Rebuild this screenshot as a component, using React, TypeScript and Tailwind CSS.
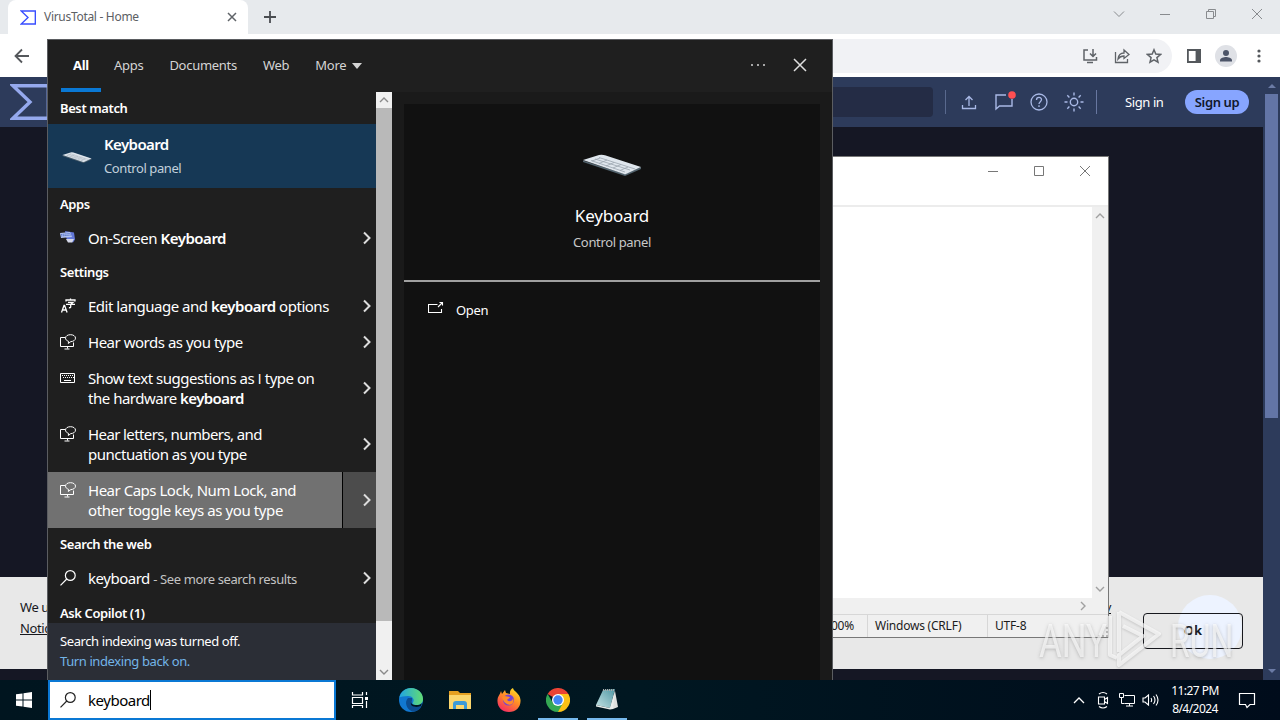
import type { ReactNode } from 'react';

type IconProps = { className?: string };

function VtLogo({ className }: IconProps) {
  return (
    <svg viewBox="0 0 40 36" className={className} fill="none" stroke="currentColor" strokeWidth="3.4">
      <path d="M3 1.7h35.3v32.6H3L20 18z" />
    </svg>
  );
}

function KeyboardImage({ className }: IconProps) {
  return (
    <svg viewBox="0 0 60 22" className={className}>
      <path d="M1 6.5l42 13.500 16-7v2l-16 7L1 8z" fill="#53646f" />
      <path d="M1 6L17 1q3-.8 6 .2L59 13l-15 7q-1 .4-2 0z" fill="#dfe6ed" />
      <g stroke="#9aa4af" strokeWidth=".8" fill="none">
        <path d="M9 6.5l34 11.500M13 5l35 11M17 3.500l36 11.500" />
        <path d="M18 4L10 7M25 6l-8 3.500M32 8.500l-8 3.500M39 10.500l-8 3.500M46 13l-8 3.500" />
      </g>
    </svg>
  );
}

function NarratorIcon() {
  return (
    <svg viewBox="0 0 16 16" className="size-4" fill="none" stroke="#fff" strokeWidth="1">
      <path d="M5 3.5H.5v9h13V8.500M4.500 15h5M7.500 12.500v2" />
      <path d="M8.300 9.500l.3-2.100C6.500 6.500 5.500 5.600 5.500 4.100 5.500 2 7.700.7 10.500.7s5 1.400 5 3.400-2 3.400-4.700 3.500z" />
    </svg>
  );
}

function LanguageIcon() {
  return (
    <svg viewBox="0 0 16 16" className="size-4" fill="none" stroke="#fff" strokeWidth="1.3">
      <path d="M1.500 14.500L4 7.500h.6l2.500 7M2.500 12h4M6 3.500V2h9v1.500M10.500.5V2M8 4.300h5l-2.300 2V9q0 1-1.800.7M6 6.300h9" />
    </svg>
  );
}

function TinyKeyboardIcon() {
  return (
    <svg viewBox="0 0 16 16" className="size-4" fill="none" stroke="#fff">
      <path d="M.5 3.5h14v9H.5z" />
      <path d="M2 5.500h12M3 7.500h11" strokeDasharray="1 1" />
      <path d="M4 10.500h7" />
    </svg>
  );
}

function OskIcon() {
  return (
    <svg viewBox="0 0 16 16" className="size-4">
      <path d="M5 1l9 1.500 1 7-2 3-6-2z" fill="#6378d8" />
      <path d="M6 9h8l-2 3.500H8z" fill="#d5d8e8" />
      <path d="M0 3l10-1 2 5-11 1z" fill="#b3c3f0" />
      <path d="M1 4.500l9-1M1 6l10-1" stroke="#5775c8" strokeDasharray="1.5 .6" />
    </svg>
  );
}

function SearchIcon({ className }: IconProps) {
  return (
    <svg viewBox="0 0 16 16" className={className} fill="none" stroke="currentColor" strokeWidth="1.2">
      <circle cx="10.3" cy="5.5" r="4.9" />
      <path d="M6.800 9L.5 15.300" />
    </svg>
  );
}

function Chevron() {
  return (
    <svg viewBox="0 0 10 14" className="h-3.5 w-2.5" fill="none" stroke="#dcdcdc" strokeWidth="2">
      <path d="M2 1.500L7.500 7 2 12.500" />
    </svg>
  );
}

function SmallArrow({ className }: IconProps) {
  return (
    <svg viewBox="0 0 10 6" className={className} fill="none" stroke="currentColor" strokeWidth="1.4">
      <path d="M1 5l4-4 4 4" />
    </svg>
  );
}

function TabStrip() {
  return (
    <div className="flex h-[34px] bg-[#e7eaed] pl-2">
      <div className="flex w-60 items-center rounded-t-lg bg-white pl-3 pr-2.5">
        <VtLogo className="h-[15px] w-4 text-[#394eff]" />
        <span className="ml-2 flex-1 text-xs tracking-[-0.3px] text-[#5c6064]">VirusTotal - Home</span>
        <svg viewBox="0 0 12 12" className="size-3" stroke="#5f6368" strokeWidth="1.5">
          <path d="M2 2l8 8M10 2l-8 8" />
        </svg>
      </div>
      <svg viewBox="0 0 12 12" className="ml-4 mt-[11px] size-3" stroke="#4a4d51" strokeWidth="1.8">
        <path d="M6 0v12M0 6h12" />
      </svg>
      <div className="ml-auto flex gap-[34px] pr-[17px] pt-2 text-[#888b8e]">
        <svg viewBox="0 0 12 12" className="size-3" fill="none" stroke="currentColor">
          <path d="M1 3.500l5 5 5-5" />
        </svg>
        <svg viewBox="0 0 12 12" className="size-3" stroke="currentColor">
          <path d="M1 6.500h10" />
        </svg>
        <svg viewBox="0 0 12 12" className="size-3" fill="none" stroke="currentColor">
          <path d="M1.500 3.500h7v7h-7zM3.500 3.500v-2h7v7h-2" />
        </svg>
        <svg viewBox="0 0 12 12" className="size-3" stroke="currentColor">
          <path d="M1 1l10 10M11 1L1 11" />
        </svg>
      </div>
    </div>
  );
}

function Toolbar() {
  return (
    <div className="flex h-[43px] items-center bg-white pl-[14px]">
      <svg viewBox="0 0 16 16" className="size-4" fill="none" stroke="#55585c" strokeWidth="1.8">
        <path d="M15 8H2M8 1.500L1.500 8 8 14.500" />
      </svg>
      <div className="ml-24 flex h-[34px] flex-1 items-center justify-end gap-4 rounded-full bg-[#f1f2f5] pr-[10px] text-[#5f6368]">
        <svg viewBox="0 0 16 16" className="size-4" fill="none" stroke="currentColor" strokeWidth="1.5">
          <path d="M6 2H2v10h12.500V9M5 14.500h6M11 1v7M8 5.500l3 3 3-3" />
        </svg>
        <svg viewBox="0 0 16 16" className="size-4" fill="none" stroke="currentColor" strokeWidth="1.3">
          <path d="M1.500 4v10.500h12V11M4 11c.5-4 3-6 6-6V2l5 4.500-5 4V8C7.500 8 5.500 9 4 11z" />
        </svg>
        <svg viewBox="0 0 16 16" className="size-4" fill="none" stroke="currentColor" strokeWidth="1.5">
          <path d="M8 1.800l1.800 4.300 4.700.4-3.600 3.100 1.100 4.600L8 11.800l-4 2.400 1.100-4.600-3.600-3.100 4.700-.4z" />
        </svg>
      </div>
      <svg viewBox="0 0 14 14" className="ml-[15px] size-3.5" fill="none" stroke="#54585c" strokeWidth="1.8">
        <path d="M.9 1h12.200v12H.9z" />
        <path d="M9.500 1h4v12h-4z" fill="#54585c" />
      </svg>
      <svg viewBox="0 0 22 22" className="ml-[14px] size-[22px]" fill="#4d5568">
        <circle cx="11" cy="11" r="11" fill="#dfe1e6" />
        <circle cx="11" cy="8" r="3" />
        <path d="M5 16.500v-1.200C5 13 9 12 11 12s6 1 6 3.300v1.200z" />
      </svg>
      <svg viewBox="0 0 4 14" className="ml-5 mr-[19px] h-3.5 w-1" fill="#54585c">
        <circle cx="2" cy="2" r="1.6" />
        <circle cx="2" cy="7" r="1.6" />
        <circle cx="2" cy="12" r="1.6" />
      </svg>
    </div>
  );
}

function SiteHeader() {
  return (
    <header className="flex h-[50px] items-center bg-[#2d3b5b] pl-[10px] text-[#a9b9e6]">
      <VtLogo className="h-9 w-10 text-[#95a9ee]" />
      <div className="ml-20 h-[30px] flex-1 rounded bg-[#242c45]" />
      <div className="ml-3 h-6 w-px bg-[#59698e]" />
      <svg viewBox="0 0 16 16" className="ml-[15px] size-4" fill="none" stroke="currentColor" strokeWidth="1.3">
        <path d="M8 12V2.500M4.500 6L8 2.500 11.500 6M1.500 11v3.500h13V11" />
      </svg>
      <svg viewBox="0 0 24 24" className="ml-[15px] size-6" fill="none" stroke="currentColor" strokeWidth="1.4">
        <path d="M14 5H4v14l3.500-3H20V9" />
        <circle cx="20" cy="5" r="3.8" fill="#ff4f52" stroke="none" />
      </svg>
      <svg viewBox="0 0 18 18" className="ml-[14px] size-[18px]" fill="none" stroke="currentColor" strokeWidth="1.3">
        <circle cx="9" cy="9" r="8" />
        <path d="M6.500 7c0-3.500 5-3.300 5-.4C11.500 8.700 9 8.600 9 11M9 12.200V14" />
      </svg>
      <svg viewBox="0 0 20 20" className="ml-4 size-5" fill="none" stroke="currentColor" strokeWidth="1.4">
        <circle cx="10" cy="10" r="3.7" />
        <path d="M10 .5v3M10 16.500v3M.5 10h3M16.500 10h3M3.300 3.300l2.100 2.100M14.600 14.600l2.100 2.100M3.300 16.700l2.100-2.100M14.600 5.400l2.100-2.100" />
      </svg>
      <div className="ml-3 h-6 w-px bg-[#6877a0]" />
      <span className="ml-7 w-10 whitespace-nowrap pt-px text-[13px] tracking-[-0.4px] text-white">Sign in</span>
      <span className="ml-5 flex h-6 w-16 items-center justify-center rounded-full bg-[#87a5ff] pt-px text-[13px] font-semibold tracking-[-0.4px] text-[#11182c]">
        Sign up
      </span>
      <div className="w-[14px]" />
    </header>
  );
}

function Browser() {
  return (
    <div className="flex h-[680px] flex-col">
      <TabStrip />
      <Toolbar />
      <div className="flex flex-1">
        <div className="flex flex-1 flex-col bg-[#151724]">
          <SiteHeader />
          <div className="flex-1" />
          <div className="mb-[11px] flex h-[92px] justify-between bg-[#e8e8e8] pl-5 pr-5 text-[13px] text-[#17181d]">
            <div className="w-[1091px] pt-5 leading-[21px] tracking-[-0.4px]">
              <p className="flex justify-between">
                We use cookies
                <span className="underline">Privacy</span>
              </p>
              <p className="underline">Notice</p>
            </div>
            <div className="relative mt-9 h-9 w-[100px]">
              <div className="absolute -top-[18px] left-[35px] size-16 rounded-full bg-[#edf3ff]" />
              <div className="relative flex h-full items-center justify-center rounded border border-[#17181d] font-bold">Ok</div>
            </div>
          </div>
        </div>
        <div className="flex w-[17px] flex-col items-center justify-between bg-[#2d3b5b] py-[7px]">
          <div className="flex flex-col items-center gap-[6px]">
            <div className="border-x-4 border-b-4 border-x-transparent border-b-[#6b7ba5]" />
            <div className="h-[324px] w-[13px] bg-[#6375a6]" />
          </div>
          <div className="border-x-4 border-t-4 border-x-transparent border-t-[#6b7ba5]" />
        </div>
      </div>
    </div>
  );
}

function Notepad() {
  return (
    <div className="absolute left-[700px] top-[156px] flex h-[482px] w-[409px] flex-col border border-[#777] bg-white">
      <div className="flex h-[50px] justify-end gap-[34px] border-b-2 border-[#ececec] pr-[17px] pt-2 text-[#777]">
        <svg viewBox="0 0 12 12" className="size-3" stroke="currentColor">
          <path d="M1 6.500h10" />
        </svg>
        <svg viewBox="0 0 12 12" className="size-3" fill="none" stroke="currentColor">
          <path d="M1.500 1.500h9v9h-9z" />
        </svg>
        <svg viewBox="0 0 12 12" className="size-3" stroke="currentColor">
          <path d="M1 1l10 10M11 1L1 11" />
        </svg>
      </div>
      <div className="flex flex-1">
        <div className="flex-1" />
        <div className="flex w-4 flex-col items-center justify-between bg-[#f0f0f0] py-1.5 text-[#a0a0a0]">
          <SmallArrow className="h-1.5 w-2.5" />
          <SmallArrow className="h-1.5 w-2.5 rotate-180" />
        </div>
      </div>
      <div className="flex h-4 items-center justify-end bg-[#f0f0f0] pr-5 text-[#a0a0a0]">
        <SmallArrow className="h-1.5 w-2.5 rotate-90" />
      </div>
      <div className="flex h-[23px] items-center border-t border-[#d7d7d7] bg-[#f0f0f0] text-xs tracking-[-0.22px] text-[#1c1c1c]">
        <span className="w-[153px] text-right">100%</span>
        <span className="ml-[13px] flex h-full w-[120px] items-center border-l border-[#d7d7d7] pl-[7px]">Windows (CRLF)</span>
        <span className="flex h-full items-center border-l border-[#d7d7d7] pl-[7px]">UTF-8</span>
        <span className="ml-auto mt-auto h-2.5 w-2.5 border-b-2 border-r-2 border-dotted border-[#bbb]" />
      </div>
    </div>
  );
}

function Watermark() {
  return (
    <div className="absolute left-[1039px] top-[606px] flex h-[68px] w-[196px] items-center text-white/65 [text-shadow:0_1px_4px_#8888]">
      <span className="w-[62px] origin-left scale-x-[0.74] font-['Roboto'] text-[47px] leading-none">ANY</span>
      <svg viewBox="0 0 56 64" className="ml-[6px] h-16 w-14 drop-shadow-[0_1px_1px_#8888]" fill="none" stroke="currentColor" strokeWidth="4" strokeLinejoin="round">
        <path d="M3 8v39l7 3M12 4v40M12 4l40 22L12 57V47l24-19-20-10" />
      </svg>
      <span className="ml-[7px] w-[62px] origin-left scale-x-[0.68] font-['Roboto'] text-[47px] leading-none">RUN</span>
    </div>
  );
}

function SectionTitle({ children }: { children: ReactNode }) {
  return <h3 className="flex h-8 items-center pl-3 pt-px text-[13px] font-semibold tracking-[-0.4px] text-white">{children}</h3>;
}

interface ResultProps {
  icon: ReactNode;
  children: ReactNode;
  tall?: boolean;
  active?: boolean;
}

function Result({ icon, children, tall, active }: ResultProps) {
  return (
    <div className={`flex ${tall ? 'h-14' : 'h-9'} ${active ? 'bg-[#4c4c4c]' : ''}`}>
      <div className={`flex w-[295px] gap-3 pl-3 pt-2 ${active ? 'border-r border-black bg-[#717171]' : ''}`}>
        <div className="shrink-0 pt-0.5">{icon}</div>
        <div className="whitespace-nowrap text-[15px] leading-5 tracking-[-0.48px] text-white">{children}</div>
      </div>
      <div className="flex flex-1 items-center justify-end pr-1">
        <Chevron />
      </div>
    </div>
  );
}

function ResultList() {
  return (
    <div className="flex w-[328px] flex-col">
      <SectionTitle>Best match</SectionTitle>
      <div className="flex h-16 items-center bg-[#163855] pl-[14px]">
        <KeyboardImage className="mt-0.5 h-[11px] w-[30px]" />
        <div className="-mt-px ml-3 tracking-[-0.4px]">
          <p className="text-[15px] font-semibold leading-6 tracking-[-0.6px] text-white">Keyboard</p>
          <p className="text-[13px] leading-6 text-[#c2d0db]">Control panel</p>
        </div>
      </div>
      <SectionTitle>Apps</SectionTitle>
      <Result icon={<OskIcon />}>
        On-Screen <b className="font-semibold">Keyboard</b>
      </Result>
      <SectionTitle>Settings</SectionTitle>
      <Result icon={<LanguageIcon />}>
        Edit language and <b className="font-semibold">keyboard</b> options
      </Result>
      <Result icon={<NarratorIcon />}>Hear words as you type</Result>
      <Result icon={<TinyKeyboardIcon />} tall>
        Show text suggestions as <span className="font-['Open_Sans']">I</span> type on
        <br />
        the hardware <b className="font-semibold tracking-[-0.6px]">keyboard</b>
      </Result>
      <Result icon={<NarratorIcon />} tall>
        <span className="tracking-[-0.6px]">Hear letters, numbers, and</span>
        <br />
        punctuation as you type
      </Result>
      <Result icon={<NarratorIcon />} tall active>
        Hear Caps Lock, Num Lock, and
        <br />
        <span className="tracking-[-0.4px]">other toggle keys as you type</span>
      </Result>
      <SectionTitle>Search the web</SectionTitle>
      <Result icon={<SearchIcon className="size-4 text-white" />}>
        keyboard <span className="text-[13px] tracking-[-0.38px] text-[#c4c4c4]">- See more search results</span>
      </Result>
      <h3 className="h-[27px] pl-3 pt-[7px] text-[13px] font-semibold leading-5 tracking-[-0.4px] text-white">Ask Copilot (1)</h3>
      <div className="h-[57px] bg-[#2b2e36] pl-3 pt-2 text-[13px] leading-5 tracking-[-0.4px]">
        <p className="text-white">Search indexing was turned off.</p>
        <p className="text-[#73b5e8]">Turn indexing back on.</p>
      </div>
    </div>
  );
}

function SearchPanel() {
  return (
    <div className="absolute left-[47px] top-[39px] flex h-[641px] w-[786px] flex-col border-x border-t border-[#5b5d61] bg-[#1f1f1f]">
      <div className="flex h-[52px] items-center pl-[13px] text-[13px] tracking-[-0.28px] text-[#d4d4d4]">
        <div className="flex h-full w-10 flex-col items-center justify-between">
          <span className="pt-4 font-bold leading-[19px] text-white">All</span>
          <span className="h-1 w-full bg-[#0a78d4]" />
        </div>
        <span className="ml-[13px]">Apps</span>
        <span className="ml-[26px]">Documents</span>
        <span className="ml-[26px]">Web</span>
        <span className="ml-[26px]">More</span>
        <span className="ml-[6px] border-x-[5px] border-t-[6px] border-x-transparent border-t-[#d4d4d4]" />
        <svg viewBox="0 0 16 4" className="-mt-0.5 ml-auto h-1 w-4" fill="#d4d4d4">
          <circle cx="2" cy="2" r="1" />
          <circle cx="8" cy="2" r="1" />
          <circle cx="14" cy="2" r="1" />
        </svg>
        <svg viewBox="0 0 14 14" className="-mt-0.5 ml-[27px] mr-[25px] size-3.5" stroke="#dedede" strokeWidth="1.5">
          <path d="M1 1l12 12M13 1L1 13" />
        </svg>
      </div>
      <div className="flex flex-1">
        <ResultList />
        <div className="flex w-4 flex-col items-center bg-[#f0f0f0] text-[#8a8a8a]">
          <SmallArrow className="my-[5px] h-1.5 w-2.5 shrink-0" />
          <div className="h-[513px] w-4 bg-[#b9b9b9]" />
          <SmallArrow className="mb-[5px] mt-auto h-1.5 w-2.5 shrink-0 rotate-180" />
        </div>
        <div className="flex-1 bg-[#1a1a1a] px-3 pt-3">
          <div className="h-full bg-[#111]">
            <div className="flex h-[178px] flex-col items-center border-b-2 border-[#a0a0a0] pt-[50px]">
              <KeyboardImage className="h-[22px] w-[60px]" />
              <h2 className="mt-[28px] text-[17px] leading-6 tracking-[-0.2px] text-white">Keyboard</h2>
              <p className="mt-[4px] text-[13px] leading-5 tracking-[-0.35px] text-[#c8c8c8]">Control panel</p>
            </div>
            <div className="flex items-center gap-3 pl-6 pt-[18px] text-[13px] leading-5 tracking-[-0.3px] text-white">
              <svg viewBox="0 0 16 16" className="-mt-1 size-4" fill="none" stroke="#fff" strokeWidth="1.1">
                <path d="M9.500 4.500H.5v8h13V9M10 7l4.500-4.500M11.500 2.500h3V5.500" />
              </svg>
              Open
            </div>
          </div>
        </div>
      </div>
    </div>
  );
}

function EdgeIcon() {
  return (
    <svg viewBox="0 0 24 24" className="size-6">
      <defs>
        <linearGradient id="edgeTop" x1="0" x2="1">
          <stop stopColor="#20a5e3" />
          <stop offset="1" stopColor="#62dc73" />
        </linearGradient>
      </defs>
      <circle cx="12" cy="12" r="12" fill="#1178d1" />
      <path d="M.3 9.500C1.500 4 6.300 0 12 0c7 0 12 5 12 11 0 4-3 6-6.500 6-3 0-4.500-1-3.500-2.500 2-3-.5-6.500-5-6.500C5 8 1.500 9 .3 9.500z" fill="url(#edgeTop)" />
      <path d="M9 10c-4 4-1.500 11 4 13.500C20 24 23 18.500 22 18c-6 3-12-1-9-5.500L13 10z" fill="#0c4d91" />
      <path d="M13 12c-2 3 0 5 4.500 5 2 0 4-.5 5.500-1.800L22 18c-6 2.500-13 0-9-6z" fill="#001723" />
    </svg>
  );
}

function FolderIcon() {
  return (
    <svg viewBox="0 0 22 18" className="h-[18px] w-[22px]">
      <path d="M0 0h9l2 2h11v4H0z" fill="#e5a021" />
      <path d="M0 4h22v14H0z" fill="#fbd66d" />
      <path d="M4 18v-5q0-3 3-3h8q3 0 3 3v5h-3v-4H7v4z" fill="#3c9ad7" />
    </svg>
  );
}

function FirefoxIcon() {
  return (
    <svg viewBox="0 0 24 24" className="size-6">
      <defs>
        <linearGradient id="foxBody" x1=".8" y1="0" x2=".2" y2="1">
          <stop stopColor="#ffe226" />
          <stop offset=".45" stopColor="#ff8a28" />
          <stop offset="1" stopColor="#f52667" />
        </linearGradient>
      </defs>
      <path d="M4 3l1 3 3-4 1 3 4 1c-.5-3 1-5 3-6 0 3 7 5 7.500 12C24 19 19 24 12 24S0 19 .5 12C.7 8 3 7 4 3z" fill="url(#foxBody)" />
      <circle cx="11.5" cy="12" r="5.5" fill="#7544d5" />
      <path d="M5 9c3-2 5 0 8 0-1 2-3 2-3 3 3 3 6 0 6-2 3 9-9 9-11-1z" fill="#ff8b2a" />
    </svg>
  );
}

function ChromeIcon() {
  return (
    <svg viewBox="0 0 24 24" className="size-6">
      <path d="M12 12L1.600 6A12 12 0 0 1 22.400 6z" fill="#ea4335" />
      <path d="M12 12V6h10.400A12 12 0 0 1 12 24z" fill="#fbc116" />
      <path d="M12 12l5 3-5 9A12 12 0 0 1 1.600 6L7 15z" fill="#34a853" />
      <circle cx="12" cy="12" r="6" fill="#fff" />
      <circle cx="12" cy="12" r="4.7" fill="#4285f4" />
    </svg>
  );
}

function NotepadIcon() {
  return (
    <svg viewBox="0 0 24 24" className="size-6">
      <defs>
        <linearGradient id="padPage" x1="0" y1="1" x2="1" y2="0">
          <stop stopColor="#c5e3e5" />
          <stop offset="1" stopColor="#4f97a3" />
        </linearGradient>
      </defs>
      <path d="M20 3l3 16-5 2-3-1z" fill="#dfe1df" />
      <path d="M8 2l12-1-5 19-14-3z" fill="url(#padPage)" />
      <path d="M1 17l14 3 5-18-2 19-3 .5-14-3z" fill="#e9eeec" />
      <path d="M8 2h12" stroke="#aaa" strokeDasharray="1 1" strokeWidth="2" />
    </svg>
  );
}

function Taskbar() {
  return (
    <div className="flex h-10 bg-linear-to-r from-[#00151f] via-[#001721] to-[#000c1b] text-white">
      <div className="flex w-12 items-center justify-center">
        <svg viewBox="0 0 16 16" className="size-4" fill="#fff">
          <path d="M0 2.300L6.500 1.400v6.100H0zM7.500 1.300L16 0v7.500H7.500zM0 8.500h6.500v6.100L0 13.700zM7.500 8.500H16V16l-8.500-1.300z" />
        </svg>
      </div>
      <div className="flex w-[288px] items-center border-2 border-[#0a78d4] bg-white pl-[10px] text-[#222]">
        <SearchIcon className="size-4" />
        <span className="ml-3 border-r border-black text-[15px] leading-5 tracking-[-0.48px] text-black">keyboard</span>
      </div>
      <div className="flex w-12 items-center justify-center">
        <svg viewBox="0 0 18 16" className="h-4 w-[18px]" fill="none" stroke="#fff" strokeWidth="1.2">
          <path d="M1.500 0v3h10V0M1.500 5.500h10v6h-10zM1.500 16v-2.500h10V16M15.500 0v3M15.500 9v7" />
          <path d="M14 5h3v3h-3z" fill="#fff" stroke="none" />
        </svg>
      </div>
      <div className="ml-0.5 flex w-[49px] items-center justify-center"><EdgeIcon /></div>
      <div className="flex w-[49px] items-center justify-center"><FolderIcon /></div>
      <div className="flex w-[49px] items-center justify-center"><FirefoxIcon /></div>
      <div className="flex w-[49px] flex-col items-center justify-between pt-2"><ChromeIcon /><span className="h-[2px] w-10 bg-[#76b9ed]" /></div>
      <div className="flex w-[49px] flex-col items-center justify-between pt-2"><NotepadIcon /><span className="h-[2px] w-10 bg-[#76b9ed]" /></div>
      <div className="ml-auto flex items-center">
        <svg viewBox="0 0 12 8" className="h-2 w-3" fill="none" stroke="#fff" strokeWidth="1.3">
          <path d="M1 7l5-5 5 5" />
        </svg>
        <svg viewBox="0 0 14 18" className="ml-[11px] h-[18px] w-3.5" fill="none" stroke="#fff" strokeWidth="1.1">
          <path d="M2.500 6h6v7h-6zM8.500 8.500l3-2v6l-3-2M3 3q4-3 8 0M3 15.500q4 3 8 0" />
        </svg>
        <svg viewBox="0 0 16 16" className="ml-[9px] size-4" fill="none" stroke="#fff">
          <path d="M.5 1.500h4v4h-4zM2.500 5.500v6h3M5.500 3.500h10v8h-10M10.500 11.500v2.500M7 14h7" />
        </svg>
        <svg viewBox="0 0 18 16" className="ml-[7px] h-4 w-[18px]" fill="none" stroke="#fff" strokeWidth="1.1">
          <path d="M1 6v4h2l3.500 3V3L3 6zM9 6q1.300 2 0 4M11.500 4q3 4 0 8M14 2.500q4 5.500 0 11" />
        </svg>
        <div className="ml-2 w-[54px] whitespace-nowrap text-center text-xs leading-[18px] tracking-[-0.55px]">
          <p>11:27 PM</p>
          <p>8/4/2024</p>
        </div>
        <svg viewBox="0 0 18 18" className="ml-4 mr-6 size-[18px]" fill="none" stroke="#fff" strokeWidth="1.2">
          <path d="M1.500 2.500h15v11H12L9 16.500l-1.500-3h-6z" />
        </svg>
      </div>
    </div>
  );
}

export default function App() {
  return (
    <div className="relative h-[720px] w-[1280px] overflow-hidden font-['Noto_Sans','Open_Sans',sans-serif]">
      <Browser />
      <Notepad />
      <SearchPanel />
      <Watermark />
      <Taskbar />
    </div>
  );
}
